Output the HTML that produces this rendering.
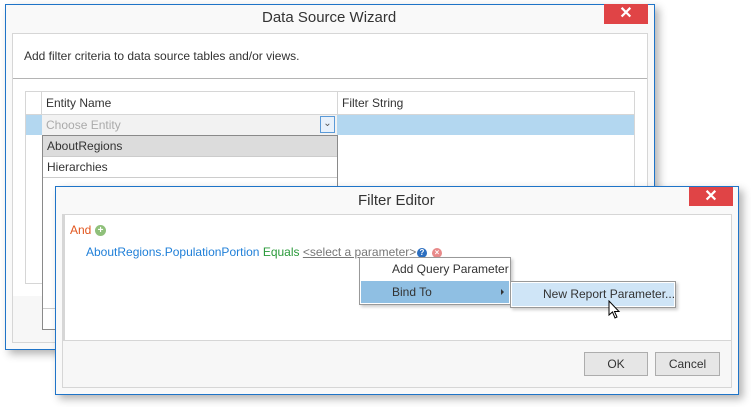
<!DOCTYPE html>
<html><head><style>
*{box-sizing:border-box;margin:0;padding:0}
body{width:751px;height:407px;background:#fff;position:relative;overflow:hidden;font-family:"Segoe UI","Liberation Sans",sans-serif;font-size:12px;color:#333}
.a{position:absolute}
.win{background:#f9f9f9;border:1px solid #1f74c8;box-shadow:4px 4px 8px rgba(0,0,0,.3)}
.close{background:#e04446;color:#fff;text-align:center;font-size:16px;line-height:20px;font-weight:bold}
.t{white-space:nowrap}
</style></head><body>
<div class="a win" style="left:5px;top:4px;width:650px;height:346px"></div>
<div class="a close" style="left:604px;top:4px;width:44px;height:20px">✕</div>
<div class="a t" style="left:262px;top:9px;font-size:15px;color:#333">Data Source Wizard</div>
<div class="a" style="left:12px;top:33px;width:636px;height:310px;border:1px solid #d6d6d6;background:#f7f7f7"></div>
<div class="a" style="left:13px;top:34px;width:634px;height:45px;background:#fff;border-bottom:1px solid #b4b4b4"></div>
<div class="a t" style="left:24px;top:49px">Add filter criteria to data source tables and/or views.</div>
<div class="a" style="left:13px;top:79px;width:634px;height:217px;background:#fff"></div>
<div class="a" style="left:25px;top:91px;width:610px;height:193px;border:1px solid #d6d6d6;background:#fff"></div>
<div class="a" style="left:41px;top:92px;width:1px;height:22px;background:#d6d6d6"></div>
<div class="a" style="left:337px;top:92px;width:1px;height:22px;background:#d6d6d6"></div>
<div class="a" style="left:26px;top:114px;width:608px;height:1px;background:#d6d6d6"></div>
<div class="a t" style="left:46px;top:96px">Entity Name</div>
<div class="a t" style="left:342px;top:96px">Filter String</div>
<div class="a" style="left:26px;top:115px;width:608px;height:20px;background:#b3d7f0"></div>
<div class="a" style="left:42px;top:115px;width:295px;height:20px;background:#f2f2f2"></div>
<div class="a t" style="left:46px;top:118px;color:#aaa">Choose Entity</div>
<div class="a" style="left:320px;top:116px;width:15px;height:17px;border:1px solid #5a9ad8;background:#e8f1fb;font-size:10px;text-align:center;line-height:14px;color:#555">⌄</div>
<div class="a" style="left:42px;top:135px;width:296px;height:195px;border:1px solid #8a8a8a;background:#fff"></div>
<div class="a" style="left:43px;top:136px;width:294px;height:21px;background:#dcdcdc;border-bottom:1px solid #ccc"></div>
<div class="a t" style="left:47px;top:139px">AboutRegions</div>
<div class="a t" style="left:47px;top:160px">Hierarchies</div>
<div class="a" style="left:43px;top:177px;width:294px;height:1px;background:#ccc"></div>
<div class="a" style="left:43px;top:308px;width:294px;height:1px;background:#ccc"></div>
<div class="a win" style="left:55px;top:186px;width:684px;height:209px"></div>
<div class="a close" style="left:689px;top:187px;width:44px;height:19px;line-height:19px">✕</div>
<div class="a t" style="left:358px;top:192px;font-size:15px">Filter Editor</div>
<div class="a" style="left:62px;top:214px;width:670px;height:174px;border:1px solid #d6d6d6;background:#f7f7f7"></div>
<div class="a" style="left:63px;top:215px;width:668px;height:126px;background:#fff;border-left:2px solid #d6d6d6;border-bottom:1px solid #d6d6d6"></div>
<div class="a t" style="left:70px;top:223px;color:#e2561e">And</div>
<div class="a" style="left:95px;top:225px;width:11px;height:11px;border-radius:50%;background:#8fc07a;color:#fff;font-size:10px;line-height:11px;text-align:center;font-weight:bold">+</div>
<div class="a t" style="left:86px;top:245px"><span style="color:#1f7fd8">AboutRegions.PopulationPortion</span> <span style="color:#2a9a3a">Equals</span> <span style="color:#777;text-decoration:underline">&lt;select a parameter&gt;</span></div>
<div class="a" style="left:417px;top:248px;width:10px;height:10px;border-radius:50%;background:#2c6fc0;color:#fff;font-size:8px;line-height:10px;text-align:center;font-weight:bold">?</div>
<div class="a" style="left:432px;top:248px;width:10px;height:10px;border-radius:50%;background:#e88a8a;color:#fff;font-size:8px;line-height:10px;text-align:center;font-weight:bold">×</div>
<div class="a" style="left:584px;top:352px;width:64px;height:24px;border:1px solid #adadad;background:#e6e6e6;text-align:center;line-height:22px">OK</div>
<div class="a" style="left:655px;top:352px;width:65px;height:24px;border:1px solid #adadad;background:#e6e6e6;text-align:center;line-height:22px">Cancel</div>
<div class="a" style="left:359px;top:257px;width:152px;height:48px;border:1px solid #999;background:#fff;box-shadow:2px 2px 3px rgba(0,0,0,.2)"></div>
<div class="a t" style="left:392px;top:262px">Add Query Parameter</div>
<div class="a" style="left:361px;top:281px;width:148px;height:22px;background:#8fbfe3"></div>
<div class="a t" style="left:392px;top:285px">Bind To</div>
<div class="a" style="left:501px;top:289px;width:0;height:0;border-left:3px solid #333;border-top:3px solid transparent;border-bottom:3px solid transparent"></div>
<div class="a" style="left:510px;top:281px;width:166px;height:27px;border:1px solid #999;background:#fff;box-shadow:2px 2px 3px rgba(0,0,0,.2)"></div>
<div class="a" style="left:512px;top:283px;width:162px;height:23px;background:#cfe5f7"></div>
<div class="a t" style="left:543px;top:287px">New Report Parameter...</div>
<svg class="a" style="left:608px;top:300px" width="14" height="20" viewBox="0 0 14 20"><path d="M1 1 L1 15 L4.5 12 L7 18 L9 17 L6.5 11.5 L11 11.5 Z" fill="#fff" stroke="#000" stroke-width="1"/></svg>
</body></html>
